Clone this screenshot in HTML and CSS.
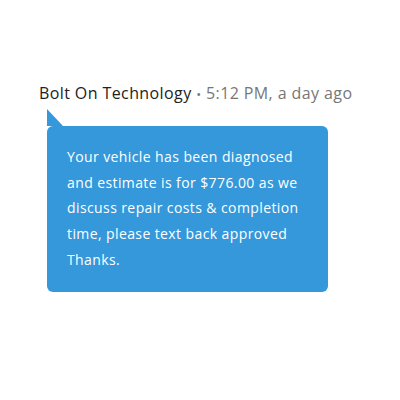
FILE: index.html
```html
<!DOCTYPE html>
<html lang="en">
<head>
    <meta charset="UTF-8">
    <title>Message</title>
    <link rel="stylesheet" href="styles.css">
</head>
<body>
    <div class="message">
        <div class="message-meta">
            <span class="sender">Bolt On Technology</span>
            <span class="dot">&bull;</span>
            <span class="time">5:12 PM, a day ago</span>
        </div>
        <div class="bubble">
            Your vehicle has been diagnosed and estimate is for $776.00 as we discuss repair costs &amp; completion time, please text back approved Thanks.
        </div>
    </div>
</body>
</html>
```

FILE: styles.css
```css
body {
    font-family: 'Open Sans', sans-serif;
    background: #fff;
    margin: 0;
    padding: 0;
}

.message {
    padding: 82px 0 0 39px;
}

.message-meta {
    font-size: 16px;
    line-height: 22px;
    letter-spacing: 0.4px;
    color: #222;
    white-space: nowrap;
}

.dot {
    color: #777;
    font-size: 13px;
}

.time {
    color: #777;
}

.bubble {
    position: relative;
    width: 281px;
    box-sizing: border-box;
    margin: 21px 0 0 8px;
    padding: 18px 20px 19px 20px;
    background: #3498db;
    color: #fff;
    font-size: 14px;
    line-height: 25.7px;
    letter-spacing: 0.4px;
    border-radius: 6px;
}

.bubble::before {
    content: "";
    position: absolute;
    left: 0;
    top: -17px;
    border-left: 16px solid #3498db;
    border-top: 17px solid transparent;
}
```
